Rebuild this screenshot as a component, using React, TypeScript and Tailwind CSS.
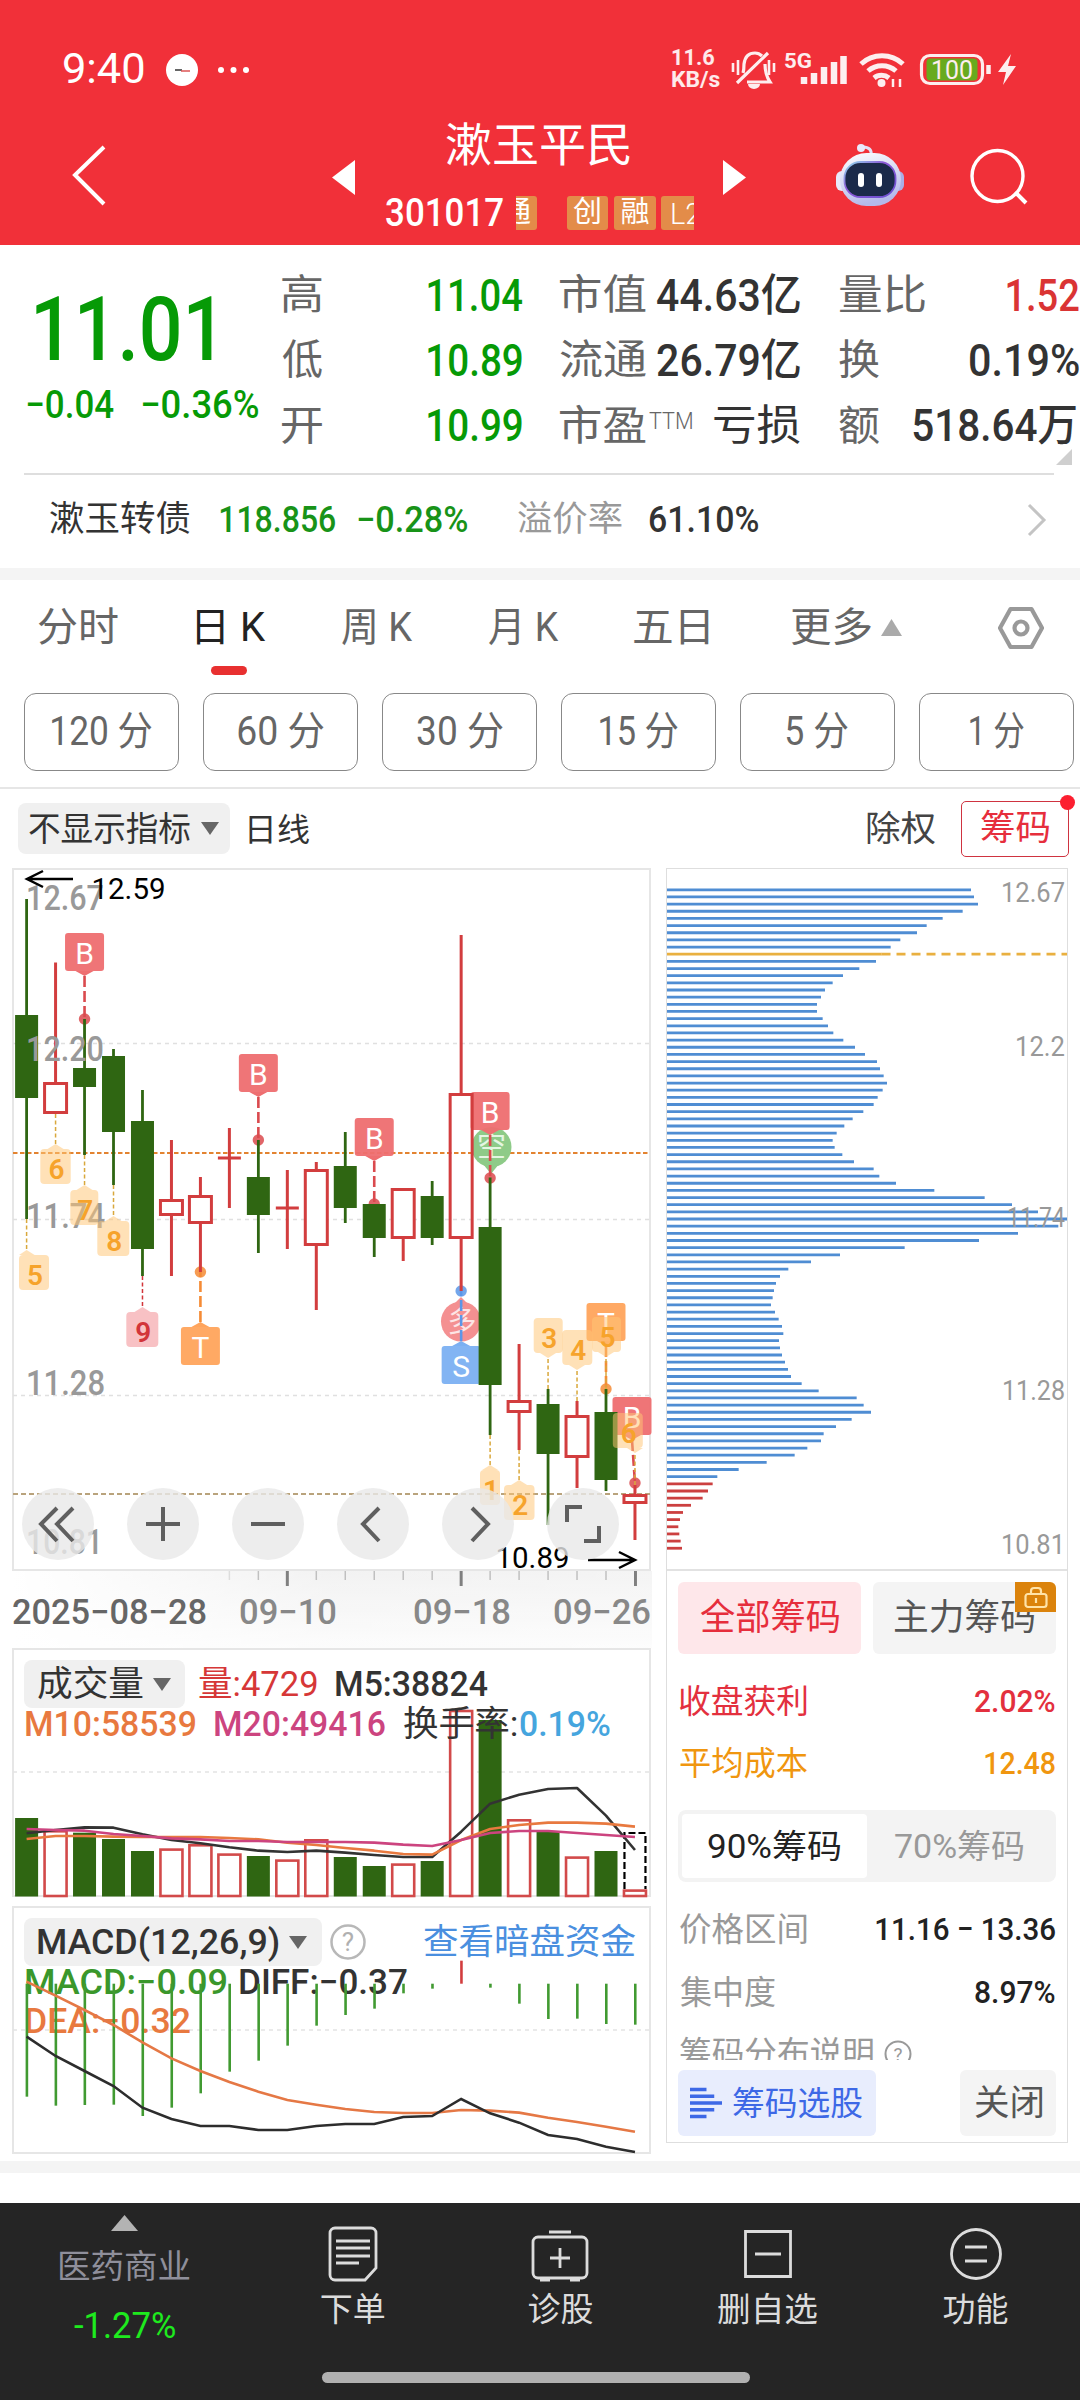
import { useLayoutEffect, useRef } from "react";
import type { ReactNode } from "react";

const FONT = "font-['Roboto','Noto_Sans_CJK_SC',sans-serif]";
const RED = "#d23d3e";
const GREEN = "#2f6612";

/** One line of text, stretched so that its ink fills the width of its box. */
function Fit({ className = "", children }: { className?: string; children: string }) {
  const box = useRef<HTMLSpanElement>(null);
  const ink = useRef<HTMLSpanElement>(null);
  useLayoutEffect(() => {
    const b = box.current;
    const s = ink.current;
    if (!b || !s) return;
    const ctx = document.createElement("canvas").getContext("2d");
    if (!ctx) return;
    const cs = getComputedStyle(s);
    ctx.font = `${cs.fontWeight} ${cs.fontSize} ${cs.fontFamily}`;
    const m = ctx.measureText(children);
    const left = -m.actualBoundingBoxLeft;
    const width = m.actualBoundingBoxRight - left;
    const k = b.clientWidth / width;
    s.style.transform = `translateX(${-left * k}px) scaleX(${k})`;
  }, [children]);
  return (
    <span ref={box} className={`block shrink-0 whitespace-nowrap leading-none ${className}`}>
      <span ref={ink} className="inline-block origin-left">
        {children}
      </span>
    </span>
  );
}

const cx = (i: number) => 26.6 + i * 28.97;

/* ---------- header ---------- */

function StatusBar() {
  return (
    <div className="flex h-[90px] items-end">
      <div className="flex h-[42px] w-full items-center">
        <Fit className="ml-[64px] w-[80px] text-[42px]">9:40</Fit>
        <svg className="ml-[20px] h-[34px] w-[90px] shrink-0" viewBox="164 54 90 34">
          <circle cx="182" cy="72" r="16" fill="#fff" />
          <path d="M175 72h7" stroke="#555" strokeWidth="1.800" />
          <path d="M181 73h9" stroke="#d55" strokeWidth="1.500" />
          <circle cx="221" cy="72" r="3" fill="#fff" />
          <circle cx="233.5" cy="72" r="3" fill="#fff" />
          <circle cx="246" cy="72" r="3" fill="#fff" />
        </svg>
        <div className="ml-[418px] flex w-[49px] flex-col font-bold text-white/90">
          <Fit className="w-[42px] text-[22px] leading-[20px]">11.6</Fit>
          <Fit className="w-[48px] text-[22px] leading-[20px]">KB/s</Fit>
        </div>
        <svg className="ml-[9px] h-[42px] w-[290px] shrink-0" viewBox="730 48 290 42" fill="none" stroke="#fff" strokeWidth="3.200" opacity="0.92">
          <path d="M733 63v9M738 60v15M769 60v15M774 63v9" strokeWidth="2.600" />
          <path d="M743 73c1-3 1-6 1-9 1-8 5-11 11-11 3 0 5 1 7 3M765 64c0 7 1 12 5 18h-23M737 83l31-30" />
          <path d="M748 84a6 5 0 0 0 12 0z" fill="#fff" stroke="none" />
          <text x="784" y="67.500" fill="#fff" stroke="none" fontSize="21" fontWeight="700" textLength="28" lengthAdjust="spacingAndGlyphs">5G</text>
          <path d="M804 84v-7M814 84v-11M824 84v-17M834 84v-22M843.500 84v-28" strokeWidth="6.500" />
          <path d="M861 64a31 31 0 0 1 42 0M868 71a21 21 0 0 1 28 0M874 78a12 12 0 0 1 15 0" strokeWidth="5" />
          <circle cx="881.500" cy="83" r="4" fill="#fff" stroke="none" />
          <path d="M893 79v8M900 79v8" strokeWidth="2.500" />
          <rect x="921.500" y="55.500" width="61" height="28" rx="8.500" />
          <rect x="926.500" y="58.500" width="51" height="22" rx="4" fill="#5db51c" stroke="none" />
          <text x="931" y="78.500" fill="#fff" stroke="none" fontSize="25" fontWeight="400" textLength="42" lengthAdjust="spacingAndGlyphs">100</text>
          <path d="M988.500 65v9" strokeWidth="4.500" />
          <path d="M1011 54l-13 18h8l-3 13 13-19h-8z" fill="#fff" stroke="none" />
        </svg>
      </div>
    </div>
  );
}

function Header() {
  return (
    <header className="flex h-[245px] shrink-0 flex-col bg-[#f13039] text-white">
      <StatusBar />
      <div className="flex h-[153px] items-start">
        <svg className="ml-[70px] mt-[53px] h-[64px] w-[38px]" viewBox="0 0 38 64" fill="none" stroke="#fff" strokeWidth="4">
          <path d="M34 4L5 32l29 29" />
        </svg>
        <svg className="ml-[224px] mt-[70px] h-[35px] w-[23px]" viewBox="0 0 23 35">
          <path d="M23 0v35L0 17.500z" fill="#fff" />
        </svg>
        <div className="ml-[31px] flex w-[308px] flex-col">
          <Fit className="ml-[60px] mt-[32px] w-[184px] text-[46px]">漱玉平民</Fit>
          <div className="mt-[25px] flex h-[40px] items-center">
            <Fit className="w-[117px] text-[39px] font-medium">301017</Fit>
            <div className="ml-[13px] flex h-[34px] w-[178px] overflow-hidden text-[29px] [&>span]:rounded-[3px] [&>span]:bg-[#e38c49]">
              <span className="-ml-[20px] w-[41px] shrink-0 text-center leading-[33px]">通</span>
              <span className="ml-[30px] w-[41px] shrink-0 text-center leading-[33px]">创</span>
              <span className="ml-[6px] w-[42px] shrink-0 text-center leading-[33px]">融</span>
              <span className="ml-[5px] w-[48px] shrink-0 pl-[9px] font-light leading-[36px]">L2</span>
            </div>
          </div>
        </div>
        <svg className="ml-[29px] mt-[70px] h-[35px] w-[23px]" viewBox="0 0 23 35">
          <path d="M0 0v35l23-17.500z" fill="#fff" />
        </svg>
        <svg className="ml-[88px] mt-[52px] h-[66px] w-[72px]" viewBox="834 142 72 66">
          <defs>
            <linearGradient id="shell" x1="0" y1="0" x2="0.300" y2="1">
              <stop offset="0" stopColor="#fff" />
              <stop offset="1" stopColor="#b4b9ea" />
            </linearGradient>
            <linearGradient id="rim" x1="0" y1="0" x2="1" y2="1">
              <stop offset="0" stopColor="#8fe0ee" />
              <stop offset="0.400" stopColor="#8d59d8" />
              <stop offset="1" stopColor="#6a4fd0" />
            </linearGradient>
          </defs>
          <path d="M871 155c1-5-2-8-8-8" fill="none" stroke="#e3e0f6" strokeWidth="3" strokeLinecap="round" />
          <circle cx="861" cy="148" r="4" fill="#e9eafc" />
          <rect x="836" y="171" width="12" height="20" rx="6" fill="#e8e9fb" />
          <rect x="892" y="171" width="12" height="20" rx="6" fill="#aaaee6" />
          <rect x="840" y="153" width="61" height="53" rx="26.500" fill="url(#shell)" />
          <rect x="844.500" y="162" width="51" height="35" rx="16" fill="#1b2a4a" stroke="url(#rim)" strokeWidth="1.800" />
          <rect x="858" y="173" width="6" height="14" rx="3" fill="#fff" />
          <rect x="876" y="173" width="6" height="14" rx="3" fill="#fff" />
        </svg>
        <svg className="ml-[61px] mt-[54px] h-[64px] w-[64px]" viewBox="967 144 64 64" fill="none" stroke="#fff" strokeWidth="3.400">
          <circle cx="997.500" cy="176" r="25.500" />
          <path d="M1015 192l11 11" strokeWidth="4" />
        </svg>
      </div>
    </header>
  );
}

/* ---------- quote ---------- */

const lab = "text-[41px] text-[#666]";
const num = "text-[44px] font-medium";

function Quote() {
  return (
    <section className="flex h-[228px] shrink-0 text-[#333]">
      <div className="ml-[27px] w-[233px] text-[#069a06]">
        <Fit className="ml-[9px] mt-[40px] w-[176px] text-[89px] font-medium">11.01</Fit>
        <div className="mt-[12px] flex text-[39px] font-medium">
          <Fit className="w-[87px]">−0.04</Fit>
          <Fit className="ml-[28px] w-[116px]">−0.36%</Fit>
        </div>
      </div>
      <div className="ml-[22px] mt-[18px] grid h-[196px] w-[240px] grid-rows-3 text-[#069a06]">
        <div className="flex items-center justify-between"><Fit className={`w-[40px] ${lab}`}>高</Fit><Fit className={`w-[94px] ${num}`}>11.04</Fit></div>
        <div className="flex items-center justify-between"><Fit className={`w-[40px] ${lab}`}>低</Fit><Fit className={`w-[94px] ${num}`}>10.89</Fit></div>
        <div className="flex items-center justify-between"><Fit className={`w-[40px] ${lab}`}>开</Fit><Fit className={`w-[94px] ${num}`}>10.99</Fit></div>
      </div>
      <div className="ml-[38px] mt-[18px] grid h-[196px] w-[240px] grid-rows-3">
        <div className="flex items-center justify-between"><Fit className={`w-[86px] ${lab}`}>市值</Fit><Fit className={`w-[143px] ${num}`}>44.63亿</Fit></div>
        <div className="flex items-center justify-between"><Fit className={`w-[86px] ${lab}`}>流通</Fit><Fit className={`w-[143px] ${num}`}>26.79亿</Fit></div>
        <div className="flex items-center">
          <Fit className={`w-[86px] ${lab}`}>市盈</Fit>
          <Fit className="-mt-[10px] ml-[3px] w-[43px] text-[24px] font-light text-[#666]">TTM</Fit>
          <Fit className="ml-[22px] w-[86px] text-[42px]">亏损</Fit>
        </div>
      </div>
      <div className="ml-[39px] mt-[18px] grid h-[196px] w-[240px] grid-rows-3">
        <div className="flex items-center justify-between"><Fit className={`w-[86px] ${lab}`}>量比</Fit><Fit className={`w-[72px] text-[#da3434] ${num}`}>1.52</Fit></div>
        <div className="flex items-center justify-between"><Fit className={`w-[40px] ${lab}`}>换</Fit><Fit className={`w-[109px] ${num}`}>0.19%</Fit></div>
        <div className="relative flex items-center justify-between">
          <Fit className={`w-[40px] ${lab}`}>额</Fit>
          <Fit className={`mr-[3px] w-[163px] ${num}`}>518.64万</Fit>
          <svg className="absolute right-[7px] -bottom-[6px] h-[16px] w-[16px]" viewBox="0 0 16 16"><path d="M16 0v16H0z" fill="#cfcfcf" /></svg>
        </div>
      </div>
    </section>
  );
}

function BondRow() {
  return (
    <div className="mx-[24px] flex h-[95px] w-[1030px] shrink-0 items-center border-t-2 border-[#dedede] pb-[4px] text-[36px] text-[#333]">
      <Fit className="ml-[26px] w-[140px] text-[35px]">漱玉转债</Fit>
      <Fit className="ml-[30px] w-[115px] font-medium text-[#189318]">118.856</Fit>
      <Fit className="ml-[23px] w-[109px] font-medium text-[#189318]">−0.28%</Fit>
      <Fit className="ml-[51px] w-[104px] text-[35px] text-[#999]">溢价率</Fit>
      <Fit className="ml-[28px] w-[108px] font-medium">61.10%</Fit>
      <svg className="ml-[269px] h-[34px] w-[20px]" viewBox="0 0 20 34" fill="none" stroke="#c4c4c4" strokeWidth="3"><path d="M2 2l15 15L2 32" /></svg>
    </div>
  );
}

function Tabs() {
  return (
    <nav className="flex h-[104px] shrink-0 items-start text-[40px] text-[#666]">
      <Fit className="ml-[38px] mt-[28px] w-[80px]">分时</Fit>
      <div className="ml-[79px] flex w-[70px] flex-col pt-[28px] text-[#222]">
        <Fit className="w-[69px]">日 K</Fit>
        <span className="ml-[14px] mt-[18px] h-[9px] w-[36px] rounded-full bg-[#e83030]" />
      </div>
      <Fit className="ml-[75px] mt-[28px] w-[71px]">周 K</Fit>
      <Fit className="ml-[76px] mt-[28px] w-[70px]">月 K</Fit>
      <Fit className="ml-[75px] mt-[28px] w-[75px]">五日</Fit>
      <Fit className="ml-[82px] mt-[28px] w-[80px]">更多</Fit>
      <svg className="ml-[10px] mt-[39px] h-[17px] w-[21px]" viewBox="0 0 21 17"><path d="M10.500 0L21 17H0z" fill="#aaa" /></svg>
      <svg className="ml-[96px] mt-[26px] h-[44px] w-[46px]" viewBox="0 0 46 44" fill="none" stroke="#999" strokeWidth="4.200" strokeLinejoin="round">
        <path d="M12.500 3h21L44 22 33.500 41h-21L2 22z" />
        <circle cx="23" cy="22" r="6.500" />
      </svg>
    </nav>
  );
}

const box = "flex h-[78px] w-[155px] shrink-0 items-center justify-center rounded-[12px] border-[1.5px] border-[#888]";

function Periods() {
  return (
    <div className="flex h-[105px] shrink-0 items-start gap-[24px] border-b-2 border-[#e6e6e6] pl-[24px] pt-[9px] text-[40px] text-[#666]">
      <div className={box}><Fit className="w-[100px]">120 分</Fit></div>
      <div className={box}><Fit className="w-[86px]">60 分</Fit></div>
      <div className={box}><Fit className="w-[86px]">30 分</Fit></div>
      <div className={box}><Fit className="w-[78px]">15 分</Fit></div>
      <div className={box}><Fit className="w-[61px]">5 分</Fit></div>
      <div className={box}><Fit className="w-[54px]">1 分</Fit></div>
    </div>
  );
}

function Caret() {
  return <svg className="h-[13px] w-[18px] shrink-0" viewBox="0 0 18 13"><path d="M0 0h18L9 13z" fill="#666" /></svg>;
}

function Toolbar() {
  return (
    <div className="flex h-[79px] shrink-0 items-center text-[34px] text-[#333]">
      <div className="ml-[18px] flex h-[51px] w-[212px] items-center rounded-[8px] bg-[#f0f0f0]">
        <Fit className="ml-[11px] w-[161px]">不显示指标</Fit>
        <span className="ml-[11px] flex"><Caret /></span>
      </div>
      <Fit className="ml-[19px] mt-[2px] w-[60px] text-[32px]">日线</Fit>
      <Fit className="ml-[558px] mt-[2px] w-[68px] text-[35px] text-[#444]">除权</Fit>
      <div className="relative ml-[26px] flex h-[56px] w-[108px] items-center justify-center rounded-[5px] border-[1.5px] border-[#cf3340] text-[#e62e3c]">
        <Fit className="w-[68px] text-[35px]">筹码</Fit>
        <span className="absolute -right-[7px] -top-[7px] h-[15px] w-[15px] rounded-full bg-[#fc1f30]" />
      </div>
    </div>
  );
}

/* ---------- candles ---------- */

type Candle = [string, number, number, number, number];
const CANDLES: Candle[] = [
  ["g", 899, 1015, 1098, 1219], ["r", 962.5, 1082, 1114, 1114], ["g", 1019, 1068, 1087, 1155],
  ["g", 1049, 1056, 1132, 1185], ["g", 1090, 1121, 1249, 1276], ["r", 1140, 1199, 1216, 1276],
  ["r", 1177, 1195, 1224, 1272], ["d", 1128, 1158, 1158, 1208], ["g", 1140, 1177, 1215, 1253],
  ["d", 1170, 1208, 1208, 1249], ["r", 1162, 1169, 1246, 1310], ["g", 1132, 1166, 1208, 1223],
  ["g", 1204, 1204, 1238, 1257], ["r", 1188, 1188, 1239, 1261], ["g", 1181, 1196, 1238, 1245],
  ["r", 935, 1093, 1239, 1291], ["g", 1177.5, 1227, 1385, 1435], ["r", 1344, 1400, 1413, 1450],
  ["g", 1389, 1404, 1454, 1525], ["r", 1401, 1415, 1458, 1488], ["g", 1389, 1412, 1480, 1491],
  ["r", 1485, 1494, 1504, 1540],
];

function Label({ x, y, w, children, size = 35, weight = 500, fill = "#999" }: { x: number; y: number; w: number; children: string; size?: number; weight?: number; fill?: string }) {
  return (
    <text x={x} y={y} fontSize={size} fontWeight={weight} fill={fill} textLength={w} lengthAdjust="spacingAndGlyphs">{children}</text>
  );
}

/** Lettered trade signal: a box above (up) or below its candle, joined by a dashed line to a dot. */
function Signal({ x, bx = x, top, dot, t, fill, line, below = false }: { x: number; bx?: number; top: number; dot: number; t: string; fill: string; line: string; below?: boolean }) {
  const edge = below ? top : top + 38;
  const tip = below ? top - 5 : top + 43;
  return (
    <g>
      <rect x={bx - 19.5} y={top} width="39" height="38" rx="3" fill={fill} opacity="0.95" />
      <path d={`M${bx - 9} ${edge}L${bx} ${tip}L${bx + 9} ${edge}z`} fill={fill} />
      <path d={`M${bx} ${tip}L${x} ${dot}`} stroke={line} strokeWidth="2.6" strokeDasharray="11 4" />
      <circle cx={x} cy={dot} r="5.700" fill={line} opacity="0.85" />
      <text x={bx} y={top + 30.500} fontSize="30" fill="#fff" textAnchor="middle">{t}</text>
    </g>
  );
}

/** Numbered count tag. */
function Count({ i, l, w, top, h = 35, from, n, up = false, red = false }: { i: number; l: number; w: number; top: number; h?: number; from: number; n: string; up?: boolean; red?: boolean }) {
  const x = cx(i);
  const edge = up ? top + h : top;
  const tip = up ? edge + 5 : edge - 5;
  const c = red ? "#d2353a" : "#f6a32b";
  return (
    <g>
      <g fill={red ? "#f28a8f" : "#ffc676"} opacity="0.52">
        <rect x={l} y={top} width={w} height={h} rx="4" />
        <path d={`M${Math.max(l, x - 8)} ${edge}L${x} ${tip}L${x + 8} ${edge}z`} />
      </g>
      <path d={`M${x} ${from}V${tip}`} stroke={red ? c : "#d9a83c"} strokeWidth="1.500" strokeDasharray="4 2.500" />
      <text x={l + w / 2 + 1} y={top + 30} fontSize="28" fontWeight="600" fill={c} textAnchor="middle">{n}</text>
    </g>
  );
}

function CandleSvg() {
  return (
    <svg className="block h-[703px] w-[640px]" viewBox="12 868 640 703">
      <rect x="13" y="869" width="637" height="701" fill="#fff" stroke="#e6e6e6" strokeWidth="2" />
      <g stroke="#e0e0e0" strokeWidth="1.300" strokeDasharray="4 4">
        <path d="M13 1043.500H650M13 1219.500H650M13 1395.500H650" />
      </g>
      <path d="M13 1153H650" stroke="#e38330" strokeWidth="2" strokeDasharray="4.500 2.500" />
      <path d="M13 1494H650" stroke="#b9a37c" strokeWidth="2" strokeDasharray="5 3" />

      <g fill="#8ecb88">
        <circle cx="491.500" cy="1147" r="20" />
        <path d="M483 1164l8 10 8-10z" />
      </g>
      <text x="491.500" y="1157" fontSize="29" fill="#e4f6e2" textAnchor="middle">空</text>
      <g fill="#f49091">
        <circle cx="461" cy="1321.500" r="20" />
        <path d="M453 1305l8-8 8 8z" />
      </g>
      <text x="462" y="1332" fontSize="29" fill="#fde5e5" textAnchor="middle">多</text>

      <Signal x={cx(2)} top={933} dot={1019} t="B" fill="#ee6e70" line="#da4a4e" />
      <Signal x={cx(8)} top={1054} dot={1140} t="B" fill="#ee6e70" line="#da4a4e" />
      <Signal x={cx(12)} top={1118} dot={1204} t="B" fill="#ee6e70" line="#da4a4e" />
      <Signal x={cx(16)} top={1092} dot={1178} t="B" fill="#ee6e70" line="#da4a4e" />
      <Signal x={cx(6)} top={1327} dot={1272} t="T" fill="#ffa45c" line="#f58b35" below />
      <Signal x={cx(15)} top={1346} dot={1291} t="S" fill="#7bb0f2" line="#5b96e8" below />
      <Signal x={cx(20)} top={1303} dot={1389} t="T" fill="#ffa45c" line="#f58b35" />
      <Signal x={cx(21)} bx={632} top={1397} dot={1483} t="B" fill="#ee6e70" line="#da4a4e" />

      {CANDLES.map(([k, hi, a, b, lo], i) => {
        const x = cx(i);
        if (k === "g")
          return (
            <g key={i} fill={GREEN}>
              <rect x={x - 1.4} y={hi} width="2.8" height={lo - hi} />
              <rect x={x - 11.5} y={a} width="23" height={b - a} />
            </g>
          );
        if (k === "d")
          return <path key={i} d={`M${x} ${hi}V${lo}M${x - 11.5} ${a}H${x + 11.5}`} stroke={RED} strokeWidth="3" />;
        return (
          <g key={i} stroke={RED} strokeWidth="3" fill="none">
            <path d={`M${x} ${hi}V${a}M${x} ${b}V${lo}`} />
            <rect x={x - 11} y={a + 1.5} width="22" height={b - a - 3} fill={i === 15 ? "none" : "#fff"} />
          </g>
        );
      })}

      <Label x={26} y={1228} w={79}>11.74</Label>
      <Count i={0} l={19} w={30} top={1255} from={1219} n="5" />
      <Count i={1} l={40.300} w={30.400} top={1149} from={1114} n="6" />
      <Count i={2} l={70.300} w={28} top={1190} from={1155} n="7" />
      <Count i={3} l={97.300} w={32} top={1221} from={1185} n="8" />
      <Count i={4} l={126.300} w={32} top={1312} from={1276} n="9" red />
      <Count i={16} l={480} w={20} top={1470} from={1435} n="1" />
      <Count i={17} l={504} w={30.500} top={1485} from={1450} n="2" />
      <Count i={18} l={533.700} w={29} top={1318} from={1389} n="3" up />
      <Count i={19} l={562.300} w={30} top={1330} from={1401} n="4" up />
      <Count i={20} l={592} w={29} top={1317} from={1389} n="5" up />
      <Count i={21} l={612.800} w={30} top={1413} from={1485} n="6" up />

      <Label x={26} y={910} w={78}>12.67</Label>
      <Label x={26} y={1061} w={78}>12.20</Label>
      <Label x={26} y={1394.500} w={79}>11.28</Label>
      <Label x={26} y={1553.500} w={77}>10.81</Label>
      <Label x={91.500} y={898.500} w={74} size={30} weight={400} fill="#000">12.59</Label>
      <Label x={495.500} y={1567.500} w={74} size={30} weight={400} fill="#000">10.89</Label>
      <path d="M73 879H27M43 871L27 879l16 8M588 1560h47M619 1552l16 8-16 8" fill="none" stroke="#000" strokeWidth="2.500" />
    </svg>
  );
}

const round = "flex h-[72px] w-[72px] shrink-0 items-center justify-center rounded-full bg-[#e9e9e9]/80";

function Round({ d }: { d: string }) {
  return (
    <div className={round}>
      <svg className="h-[44px] w-[44px]" viewBox="-22 -22 44 44" fill="none" stroke="#5f5f5f" strokeWidth="4"><path d={d} /></svg>
    </div>
  );
}

function CandleChart() {
  return (
    <div className="relative h-[703px]">
      <CandleSvg />
      <div className="absolute left-[10px] top-[620px] flex gap-[33px]">
        <Round d="M-1 -16L-17 0L-1 17M15 -16L-1 0L15 17" />
        <Round d="M-17 0H17M0 -17V17" />
        <Round d="M-17 0H17" />
        <Round d="M6 -16L-10 0L6 17" />
        <Round d="M-6 -16L10 0L-6 17" />
        <Round d="M-16 -2V-17H-1M16 2V17H1" />
      </div>
    </div>
  );
}

function DateAxis() {
  return (
    <div className="h-[77px] bg-gradient-to-b from-[#ededed] to-[#fbfbfb]">
      <div className="h-full bg-gradient-to-r from-white via-white/30 to-white/40">
        <svg className="block h-[77px] w-[640px]" viewBox="12 1571 640 77">
          {Array.from({ length: 15 }, (_, k) => k + 7).map((i) => {
            const major = i === 9 || i === 15 || i === 21;
            return (
              <path key={i} d={`M${cx(i) + (i === 21 ? 0.5 : 0)} 1571v${major ? 15 : 9}`} stroke={major ? "#808080" : i === 7 ? "#ddd" : "#c0c0c0"} strokeWidth={major ? 3 : 1.5} />
            );
          })}
          <Label x={12} y={1624} w={195} fill="#666">2025−08−28</Label>
          <Label x={239} y={1624} w={98} fill="#888">09−10</Label>
          <Label x={413} y={1624} w={98} fill="#888">09−18</Label>
          <Label x={553} y={1624} w={98} fill="#888">09−26</Label>
        </svg>
      </div>
    </div>
  );
}

/* ---------- volume and MACD ---------- */

const VOL = [1818, 1830, 1832.7, 1839, 1851, 1848.3, 1844, 1853.3, 1856, 1859.3, 1839, 1857, 1866, 1863.3, 1861, 1709.7, 1720, 1819, 1832, 1856.3, 1851, 1889.3];
const UP = [1, 5, 6, 7, 9, 10, 13, 15, 17, 19, 21];
const M5 = [580, 570, 562, 563, 583, 600, 610, 622, 632, 636, 632, 638, 645, 651, 651, 575, 491, 464, 447, 444, 527, 630];
const M10 = [597, 588, 588, 590, 591, 591, 591, 594, 598, 608, 615, 624, 632, 642, 644, 600, 567, 555, 548, 548, 551, 560];
const M20 = [567, 570, 572, 582, 588, 595, 598, 603, 603, 606, 606, 606, 608, 614, 618, 600, 579, 573, 573, 579, 585, 591];
const HIST = [590, 617, 615, 614, 648, 623, 580, 515, 482, 437, 377, 345, 326, 280, 266, 182, 263, 311, 357, 356, 372, 374];
const DEA = [245, 287, 330, 375, 427, 475, 513, 546, 575, 600, 614, 627, 636, 639, 639, 630, 632, 638, 653, 666, 680, 695];
const DIFF = [410, 468, 513, 558, 623, 657, 678, 678, 690, 690, 678, 672, 672, 651, 648, 597, 640, 668, 705, 717, 740, 756];

const line = (v: number[], y0: number) => v.map((y, i) => `${cx(i)},${y0 + y / 3}`).join(" ");

function Tag({ className, children }: { className: string; children: ReactNode }) {
  return <div className={`flex h-[48px] shrink-0 items-center gap-[10px] rounded-[8px] bg-[#f0f0f0] ${className}`}>{children}</div>;
}

function VolumeChart() {
  return (
    <div className="relative h-[250px]">
      <svg className="block h-[250px] w-[640px]" viewBox="12 1648 640 250">
        <rect x="13" y="1649" width="637" height="247" fill="#fff" stroke="#e6e6e6" strokeWidth="2" />
        <path d="M13 1772H650" stroke="#e3e3e3" strokeWidth="1.500" strokeDasharray="4 4" />
        {VOL.map((y, i) =>
          UP.includes(i) ? (
            <rect key={i} x={cx(i) - 11} y={y + 1.3} width="22" height={1894.7 - y} fill="#fff" stroke="#d24a4a" strokeWidth="2.600" />
          ) : (
            <rect key={i} x={cx(i) - 11.5} y={y} width="23" height={1896.5 - y} fill={GREEN} />
          ),
        )}
        <path d={`M${cx(21) - 10.5} 1889V1833h21V1889`} fill="none" stroke="#000" strokeWidth="2.200" strokeDasharray="7 3" />
        <g fill="none" strokeWidth="2.600" strokeLinejoin="round">
          <polyline points={line(M5, 1640)} stroke="#333" />
          <polyline points={line(M10, 1640)} stroke="#e8793f" />
          <polyline points={line(M20, 1640)} stroke="#cc447f" />
        </g>
      </svg>
      <div className="absolute left-[12px] top-[12px] w-[620px] text-[35px] text-[#333]">
        <div className="flex h-[48px] items-center">
          <Tag className="w-[161px] pl-[14px]"><Fit className="w-[105px]">成交量</Fit><Caret /></Tag>
          <Fit className="ml-[14px] w-[118px] text-[#d63737]">量:4729</Fit>
          <Fit className="ml-[19px] w-[152px] font-medium">M5:38824</Fit>
        </div>
        <div className="mt-[-2px] flex h-[36px] items-center font-medium">
          <Fit className="ml-[2px] w-[169px] text-[#e8793f]">M10:58539</Fit>
          <Fit className="ml-[20px] w-[170px] text-[#cc447f]">M20:49416</Fit>
          <Fit className="ml-[19px] w-[113px] font-normal">换手率:</Fit>
          <Fit className="ml-[3px] w-[90px] text-[#45a5de]">0.19%</Fit>
        </div>
      </div>
    </div>
  );
}

function MacdChart() {
  return (
    <div className="relative mt-[8px] h-[250px]">
      <svg className="block h-[250px] w-[640px]" viewBox="12 1906 640 250">
        <rect x="13" y="1907" width="637" height="246" fill="#fff" stroke="#e6e6e6" strokeWidth="2" />
        <path d="M13 2030H650" stroke="#e3e3e3" strokeWidth="1.500" strokeDasharray="4 4" />
      </svg>
      <div className="absolute left-[12px] top-[12px] w-[620px] text-[35px] text-[#333]">
        <div className="flex h-[48px] items-center">
          <Tag className="w-[298px] pl-[14px]"><Fit className="w-[241px] font-medium">MACD(12,26,9)</Fit><Caret /></Tag>
          <svg className="ml-[7px] h-[38px] w-[38px]" viewBox="0 0 38 38">
            <circle cx="19" cy="19" r="16.500" fill="none" stroke="#b8b8b8" strokeWidth="2.500" />
            <text x="19" y="28" fontSize="26" fill="#b0b0b0" textAnchor="middle">?</text>
          </svg>
          <Fit className="ml-[57px] w-[212px] text-[#4a8fdf]">查看暗盘资金</Fit>
        </div>
        <div className="-mt-[2px] flex h-[36px] items-center font-medium">
          <Fit className="ml-[2px] w-[200px] text-[#3a972b]">MACD:−0.09</Fit>
          <Fit className="ml-[14px] w-[167px]">DIFF:−0.37</Fit>
        </div>
        <div className="mt-[2px] flex h-[38px] items-center font-medium">
          <Fit className="ml-[2px] w-[164px] text-[#e8793f]">DEA:−0.32</Fit>
        </div>
      </div>
      <svg className="absolute left-0 top-0 h-[250px] w-[640px]" viewBox="12 1906 640 250" fill="none">
        {HIST.map((v, i) => (
          <path key={i} d={`M${cx(i) + 0.3} 1983.700V${1900 + v / 3}`} stroke={i === 15 ? RED : "#419a31"} strokeWidth="2.600" />
        ))}
        <polyline points={line(DEA, 1900)} stroke="#e57845" strokeWidth="2.600" />
        <polyline points={line(DIFF, 1900)} stroke="#2d2d2d" strokeWidth="2.600" />
      </svg>
    </div>
  );
}

/* ---------- chip distribution ---------- */

const CHIPS = [
  933, 942, 954, 908, 848, 800, 771, 721, 692, 665, 648, 598, 549, 518, 495, 483, 471, 471, 488, 504, 520, 550, 585, 615, 651, 660, 671, 681, 668, 653, 641, 610, 578, 553, 530, 518, 524, 547, 582, 641, 658, 708, 823, 974, 1056, 1134, 1221, 1195, 1074, 957, 734, 540, 453, 385, 360, 348, 342, 338, 333, 345, 356, 366, 370, 357, 360, 366, 375, 384, 393, 425, 476, 590, 611, 633, 575, 528, 491, 483, 442, 404, 320, 236, 172, 158, 144, 128, 93, 69, 60, 55, 58, 62, 66,
];

function ChipChart() {
  return (
    <svg className="block h-[700px] w-[400px]" viewBox="667 869 400 700">
      {CHIPS.map((v, i) => (
        <path key={i} d={`M667 ${889.8 + i * 7.157}H${660 + v / 3}`} stroke={i === 9 ? "#e9b040" : i > 82 ? "#cc4040" : "#4f8dd3"} strokeWidth="2.800" />
      ))}
      <path d="M881.500 954.200H1067" stroke="#e9b040" strokeWidth="2.800" strokeDasharray="9 6" />
      <Label x={1001} y={902} w={64} size={28} weight={400}>12.67</Label>
      <Label x={1015} y={1056} w={50} size={28} weight={400}>12.2</Label>
      <Label x={1007} y={1227} w={58} size={28} weight={400}>11.74</Label>
      <Label x={1002} y={1400} w={63} size={28} weight={400}>11.28</Label>
      <Label x={1001} y={1554} w={64} size={28} weight={400}>10.81</Label>
    </svg>
  );
}

function ChipPanel() {
  return (
    <div className="ml-[14px] h-[1275px] w-[402px] border-[1.5px] border-[#dedede] text-[33px]">
      <ChipChart />
      <div className="flex h-[572px] flex-col border-t-2 border-[#e2e2e2] px-[11px]">
        <div className="mt-[11px] flex justify-between">
          <div className="flex h-[72px] w-[183px] items-center justify-center rounded-[6px] bg-[#fee7ea] text-[#e62e3c]"><Fit className="w-[139px] text-[36px]">全部筹码</Fit></div>
          <div className="relative flex h-[72px] w-[183px] items-center justify-center overflow-hidden rounded-[6px] bg-[#f4f4f4] text-[#555]">
            <Fit className="w-[139px] text-[36px]">主力筹码</Fit>
            <div className="absolute right-0 top-0 flex h-[30px] w-[41px] items-center justify-center bg-[#db830c]">
              <svg className="h-[24px] w-[24px]" viewBox="0 0 24 24" fill="none" stroke="#ffe3a8" strokeWidth="2.200"><rect x="1.500" y="9" width="21" height="13" rx="2.500" /><path d="M7 9V6a3 3 0 0 1 3-3h4a3 3 0 0 1 3 3v3M12 13v5" /></svg>
            </div>
          </div>
        </div>
        <div className="mt-[28px] flex h-[38px] items-center justify-between text-[#e3303e]"><Fit className="ml-[2px] w-[127px]">收盘获利</Fit><Fit className="mr-[1px] w-[80px] text-[32px] font-medium">2.02%</Fit></div>
        <div className="mt-[24px] flex h-[38px] items-center justify-between text-[#f0960f]"><Fit className="ml-[2px] w-[127px]">平均成本</Fit><Fit className="mr-[1px] w-[70px] text-[32px] font-medium">12.48</Fit></div>
        <div className="mt-[28px] flex h-[72px] items-center rounded-[8px] bg-[#f3f3f3] p-[4px]">
          <div className="flex h-full w-[185px] items-center justify-center rounded-[4px] bg-white text-[#222]"><Fit className="w-[133px]">90%筹码</Fit></div>
          <div className="flex flex-1 items-center justify-center text-[#999]"><Fit className="w-[129px]">70%筹码</Fit></div>
        </div>
        <div className="mt-[28px] flex h-[38px] items-center justify-between"><Fit className="ml-[2px] w-[127px] text-[#999]">价格区间</Fit><Fit className="mr-[1px] w-[179px] text-[32px] font-medium text-[#222]">11.16 − 13.36</Fit></div>
        <div className="mt-[25px] flex h-[38px] items-center justify-between"><Fit className="ml-[2px] w-[95px] text-[#999]">集中度</Fit><Fit className="mr-[1px] w-[80px] text-[32px] font-medium text-[#222]">8.97%</Fit></div>
        <div className="mt-[25px] flex h-[24px] items-start overflow-hidden pt-[1px] text-[#999]">
          <Fit className="ml-[2px] w-[193px]">筹码分布说明</Fit>
          <svg className="ml-[11px] mt-[3px] h-[28px] w-[28px] shrink-0" viewBox="0 0 28 28"><circle cx="14" cy="14" r="12.500" fill="none" stroke="#999" strokeWidth="2" /><text x="14" y="21" fontSize="19" fill="#999" textAnchor="middle">?</text></svg>
        </div>
        <div className="mt-[10px] flex h-[66px] justify-between">
          <div className="flex w-[198px] items-center rounded-[6px] bg-[#e8edfd] text-[#3d68e6]">
            <svg className="ml-[12px] h-[32px] w-[32px]" viewBox="0 0 33 32" stroke="#3d68e6" strokeWidth="3.600"><path d="M0 2h17M0 9h25M0 16h33M0 23h25M0 30h17" /></svg>
            <Fit className="ml-[11px] w-[129px]">筹码选股</Fit>
          </div>
          <div className="flex w-[96px] items-center justify-center rounded-[6px] bg-[#f4f4f4] text-[#555]"><Fit className="w-[67px] text-[35px]">关闭</Fit></div>
        </div>
      </div>
    </div>
  );
}

/* ---------- bottom bar ---------- */

function NavItem({ icon, children }: { icon: ReactNode; children: ReactNode }) {
  return (
    <div className="flex w-[207.600px] flex-col items-center pt-[20px]">
      <svg className="h-[62px] w-[62px]" viewBox="-31 -31 62 62" fill="none" stroke="#dcdcdc" strokeWidth="2.800">{icon}</svg>
      <div className="mt-[8px]">{children}</div>
    </div>
  );
}

function BottomNav() {
  return (
    <footer className="flex h-[197px] shrink-0 flex-col bg-[#252525] text-[#dcdcdc]">
      <div className="flex h-[169px]">
        <div className="flex w-[249px] flex-col items-center">
          <svg className="mt-[12px] h-[16px] w-[27px]" viewBox="0 0 27 16"><path d="M13.500 0L27 16H0z" fill="#b3b3b3" /></svg>
          <Fit className="mt-[19px] w-[130px] text-[33px] text-[#8f8f9b]">医药商业</Fit>
          <Fit className="mt-[25px] w-[101px] text-[36px] text-[#1eea1e]">-1.27%</Fit>
        </div>
        <NavItem icon={<path d="M-18 -26H18a5 5 0 0 1 5 5V14L12 26H-18a5 5 0 0 1 -5 -5V-21a5 5 0 0 1 5 -5zM-17 -13H17M-17 -6H17M-17 2H17M-17 9H6" />}>
          <Fit className="w-[64px] text-[33px]">下单</Fit>
        </NavItem>
        <NavItem icon={<><rect x="-27" y="-17" width="54" height="41" rx="5" /><path d="M-11 -22H11M-10 4H10M0 -6V14M-20 26H-10M10 26H20" /></>}>
          <Fit className="w-[64px] text-[33px]">诊股</Fit>
        </NavItem>
        <NavItem icon={<path d="M-22.500 -22.500H22.500V22.500H-22.500zM-13 0H13" />}>
          <Fit className="w-[99px] text-[33px]">删自选</Fit>
        </NavItem>
        <NavItem icon={<><circle r="24.500" /><path d="M-11 -7H11M-11 7H11" /></>}>
          <Fit className="w-[64px] text-[33px]">功能</Fit>
        </NavItem>
      </div>
      <div className="ml-[322px] h-[11px] w-[428px] rounded-full bg-[#b1b1b1]" />
    </footer>
  );
}

export default function App() {
  return (
    <div className={`flex h-[2400px] w-[1080px] flex-col overflow-hidden bg-white ${FONT}`}>
      <Header />
      <Quote />
      <BondRow />
      <div className="h-[12px] shrink-0 bg-[#f4f4f4]" />
      <Tabs />
      <Periods />
      <Toolbar />
      <main className="flex h-[1293px] shrink-0 pl-[12px]">
        <div className="w-[640px]">
          <CandleChart />
          <DateAxis />
          <VolumeChart />
          <MacdChart />
        </div>
        <ChipPanel />
      </main>
      <div className="h-[12px] shrink-0 bg-[#f4f4f4]" />
      <div className="h-[30px] shrink-0" />
      <BottomNav />
    </div>
  );
}
